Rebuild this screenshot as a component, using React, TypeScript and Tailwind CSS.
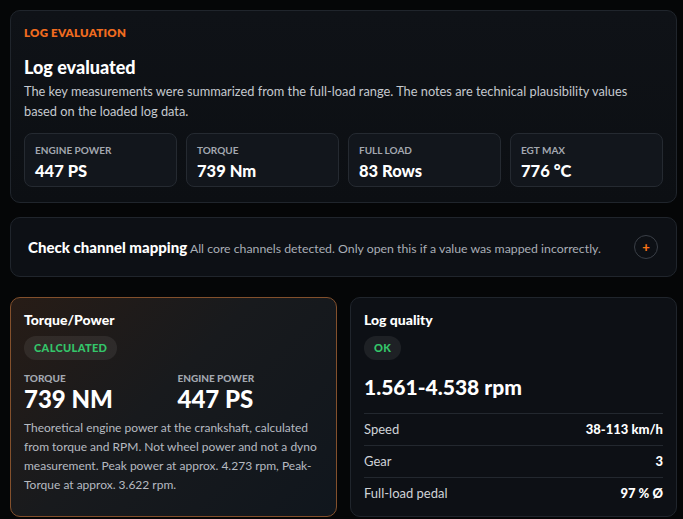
const font = { fontFamily: '"Segoe UI", Lato, "Noto Sans", sans-serif' };

const stats = [
  { label: 'Engine power', value: '447 PS' },
  { label: 'Torque', value: '739 Nm' },
  { label: 'Full load', value: '83 Rows' },
  { label: 'EGT max', value: '776 °C' },
];

const quality = [
  { label: 'Speed', value: '38-113 km/h' },
  { label: 'Gear', value: '3' },
  { label: 'Full-load pedal', value: '97 % Ø' },
];

const Badge = ({ children }: { children: React.ReactNode }) => (
  <span className="mt-[6px] inline-flex h-6 items-center self-start rounded-full bg-white/[0.07] px-[10px] text-[11px] font-black uppercase tracking-[0.03em] text-[#34c66a]">
    {children}
  </span>
);

export default function App() {
  return (
    <div className="min-h-screen bg-[#050607] pb-[10px] pl-[10px] pr-[6px] pt-[10px] text-white" style={font}>
      <section className="flex flex-col rounded-[10px] border border-[#20252c] bg-gradient-to-b from-[#0f1217] to-[#0c0f13] px-[13px] pb-[15px] pt-[14px]">
        <div className="text-[11.5px] font-extrabold uppercase leading-4 tracking-[0.02em] text-[#f06b1f]">
          Log evaluation
        </div>
        <h1 className="mt-[14px] text-[18px] font-black leading-6">Log evaluated</h1>
        <p className="mt-[2px] text-[12.8px] leading-5 text-[#c5c9cf]">
          The key measurements were summarized from the full-load range. The notes are technical
          plausibility values based on the loaded log data.
        </p>
        <div className="mt-3 grid grid-cols-4 gap-[9px]">
          {stats.map((s) => (
            <div
              key={s.label}
              className="flex h-[54px] flex-col rounded-lg border border-[#252a31] bg-[#12161c] px-[10px] pt-[9px]"
            >
              <span className="text-[10px] font-bold uppercase leading-[14px] text-[#a3a8b0]">
                {s.label}
              </span>
              <span className="mt-1 text-[16.5px] font-black leading-5">{s.value}</span>
            </div>
          ))}
        </div>
      </section>

      <section className="mt-[14px] flex h-[60px] items-center justify-between rounded-[10px] border border-[#20252c] bg-[#0d1015] pl-[17px] pr-[18px]">
        <p className="text-[12.3px] text-[#a9aeb6]">
          <span className="text-[15px] font-black text-white">Check channel mapping</span> All
          core channels detected. Only open this if a value was mapped incorrectly.
        </p>
        <button className="flex h-6 w-6 items-center justify-center rounded-full border border-[#3a3f47] text-[13px] font-black leading-none text-[#f97316]">
          +
        </button>
      </section>

      <div className="mt-5 grid h-[220px] grid-cols-2 gap-[13px]">
        <section className="flex flex-col rounded-[10px] border border-[#83502c] bg-[linear-gradient(135deg,#271c16_0%,#181a1d_45%,#10161d_100%)] pl-[13px] pr-[8px] pt-3">
          <h2 className="text-[14px] font-black leading-5">Torque/Power</h2>
          <Badge>Calculated</Badge>
          <div className="mt-[11px] grid grid-cols-2 gap-2 pr-[5px]">
            <div className="flex flex-col">
              <span className="text-[10px] font-black uppercase leading-[14px] text-[#a3a8b0]">
                Torque
              </span>
              <span className="mt-px text-[24px] font-black uppercase leading-[26px]">739 Nm</span>
            </div>
            <div className="flex flex-col">
              <span className="text-[10px] font-black uppercase leading-[14px] text-[#a3a8b0]">
                Engine power
              </span>
              <span className="mt-px text-[24px] font-black uppercase leading-[26px]">447 PS</span>
            </div>
          </div>
          <p className="mt-[6px] text-[12px] leading-[19px] text-[#b6bac1]">
            Theoretical engine power at the crankshaft, calculated from torque and RPM. Not wheel
            power and not a dyno measurement. Peak power at approx. 4.273 rpm, Peak-Torque at
            approx. 3.622 rpm.
          </p>
        </section>

        <section className="flex flex-col rounded-[10px] border border-[#20252c] bg-[#0d1015] px-[13px] pt-3">
          <h2 className="text-[14px] font-black leading-5">Log quality</h2>
          <Badge>OK</Badge>
          <div className="mt-[14px] text-[21px] font-black leading-[26px]">1.561-4.538 rpm</div>
          <div className="mt-[13px] flex flex-col">
            {quality.map((q) => (
              <div
                key={q.label}
                className="flex h-8 items-center justify-between border-t border-[#23282f] text-[13px]"
              >
                <span className="text-[#d0d3d8]">{q.label}</span>
                <span className="font-black">{q.value}</span>
              </div>
            ))}
          </div>
        </section>
      </div>
    </div>
  );
}
